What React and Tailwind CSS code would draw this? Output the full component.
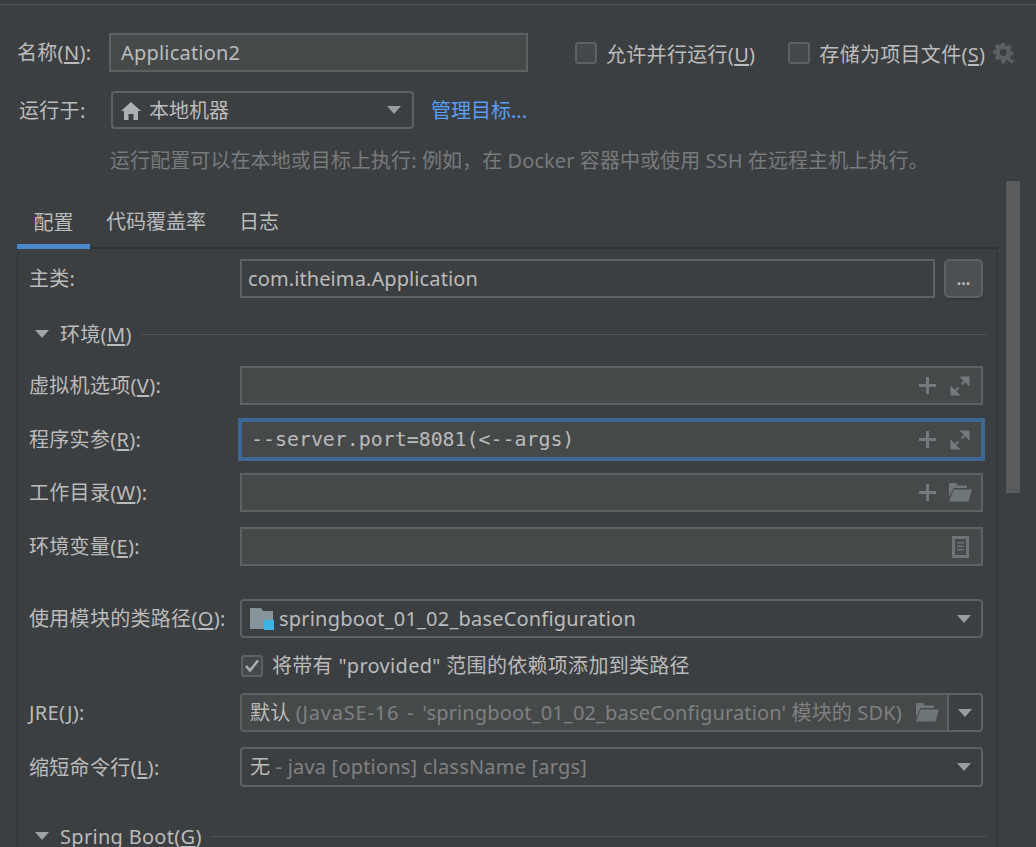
import React from 'react';

const font = { fontFamily: '"Noto Sans", "Noto Sans CJK SC", sans-serif' };

const Plus = () => (
  <svg width="17" height="17" viewBox="0 0 17 17" className="shrink-0">
    <path d="M7 0h3v7h7v3h-7v7H7v-7H0V7h7z" fill="#747a7c" />
  </svg>
);

const Expand = () => (
  <svg width="20" height="20" viewBox="0 0 20 20" className="shrink-0">
    <path d="M9.500 0.500H19.500V10.500z" fill="#747a7c" />
    <path d="M0.500 9.500V19.500H10.500z" fill="#747a7c" />
    <path d="M15 5l-3.500 3.500M5 15l3.500-3.500" stroke="#747a7c" strokeWidth="2" fill="none" />
  </svg>
);

const FolderOpen = () => (
  <svg width="24" height="19" viewBox="0 0 24 19" className="shrink-0">
    <path d="M1 0h7l2 2.500h9V5H5.500L1 14z" fill="#6e7678" />
    <path d="M5.500 6.500H24L20.500 18.500H1z" fill="#6e7678" />
  </svg>
);

const DocIcon = () => (
  <svg width="17" height="22" viewBox="0 0 17 22" className="shrink-0">
    <path fillRule="evenodd" d="M0 0h17v22H0zM3 3v16h11V3z" fill="#6e7375" />
    <path d="M5 6h7v1.500H5zM5 9.500h7V11H5zM5 13h7v1.500H5z" fill="#6e7375" />
  </svg>
);

const Arrow = () => (
  <svg width="14" height="8" viewBox="0 0 14 8" className="shrink-0">
    <path d="M0 0h14L7 8z" fill="#9a9da0" />
  </svg>
);

const Home = () => (
  <svg width="20" height="18" viewBox="0 0 20 18" className="shrink-0">
    <path d="M10 0l10 9h-3v9h-4.500v-6h-5v6H3V9H0z" fill="#aeb1b3" />
  </svg>
);

const Gear = () => (
  <svg width="22" height="22" viewBox="0 0 22 22" className="shrink-0">
    <path
      fillRule="evenodd"
      d="M8.500 1h3.400l.5 2.600 1.700.7 2.200-1.500 2.300 2.400-1.500 2.100.7 1.700 2.600.5v3.400l-2.600.5-.7 1.700 1.500 2.100-2.300 2.400-2.200-1.500-1.700.7-.5 2.600H8.500L8 17.800l-1.700-.7-2.200 1.500-2.300-2.400 1.500-2.100-.7-1.700L0 11.900V8.500l2.600-.5.700-1.700-1.500-2.100 2.300-2.400 2.200 1.500L8 2.600zM10.200 7a3.400 3.400 0 1 0 0 6.800 3.400 3.400 0 0 0 0-6.800z"
      fill="#5c5f61"
    />
    <path d="M15 18h7l-3.500 4z" fill="#5c5f61" />
  </svg>
);

const ModuleIcon = () => (
  <svg width="24" height="22" viewBox="0 0 24 22" className="shrink-0">
    <path d="M0 0h11l2 3h10v10h-9v8H0z" fill="#87939a" />
    <path d="M14 12h10v10H14z" fill="#3db3e4" />
  </svg>
);

const Checkbox = ({ checked }) => (
  <span className="flex h-[22px] w-[22px] shrink-0 items-center justify-center rounded-[3px] border-2 border-[#5d6163] bg-[#43494a]">
    {checked && (
      <svg width="16" height="14" viewBox="0 0 16 14">
        <path d="M2 7l4 4.500L14 1.500" fill="none" stroke="#a9acae" strokeWidth="2.600" />
      </svg>
    )}
  </span>
);

const Label = ({ text, hotkey, after = '):' }) => (
  <span className="inline-block pt-[4px] text-[20px] leading-none tracking-[0.3px] whitespace-nowrap text-[#bbbbbb]">
    {text}
    {hotkey && (
      <>
        (<u className="underline-offset-2">{hotkey}</u>
        {after}
      </>
    )}
  </span>
);

const Row = ({ label, className, children }) => (
  <div className={`flex items-center ${className}`}>
    <div className="w-[211px] shrink-0">{label}</div>
    {children}
  </div>
);

const Field = ({ children, focused, className = 'pr-[11px]' }) => (
  <div
    className={`flex h-[39px] w-[743px] items-center border-2 bg-[#45494a] pl-[9px] ${className} ${
      focused ? 'border-[#3d6795] ring-2 ring-[#3d6795]' : 'border-[#5e6162]'
    }`}
  >
    {children}
  </div>
);

const Section = ({ title, hotkey, className }) => (
  <div className={`flex h-[24px] items-center pl-[6px] ${className}`}>
    <svg width="14" height="8" viewBox="0 0 14 8" className="shrink-0">
      <path d="M0 0h14L7 8z" fill="#a0a3a5" />
    </svg>
    <span className="ml-[11px]">
      <Label text={title} hotkey={hotkey} after=")" />
    </span>
    <div className="mr-[10px] ml-[10px] h-px flex-1 bg-[#525455]" />
  </div>
);

const Combo = ({ children, className }) => (
  <div className={`flex w-[743px] items-center justify-between rounded-[4px] border-2 border-[#5e6162] pr-[10px] pl-[8px] ${className}`}>
    <div className="flex items-center gap-[5px] text-[20px] tracking-[0.2px] whitespace-nowrap text-[#bbbbbb]">{children}</div>
    <Arrow />
  </div>
);

export default function App() {
  return (
    <div className="relative h-[847px] w-full overflow-hidden bg-[#3c3f41]" style={font}>
      <div className="mt-[4px] h-px bg-[#545658]" />

      {/* header */}
      <div className="mt-[28px] flex items-center pl-[17px]">
        <div className="w-[92px] shrink-0">
          <Label text="名称" hotkey="N" />
        </div>
        <div className="flex h-[39px] w-[419px] items-center border-2 border-[#5e6162] bg-[#45494a] pl-[10px] text-[20px] tracking-[0.2px] text-[#bbbbbb]">
          Application2
        </div>
        <div className="ml-[47px] flex items-center gap-[9px]">
          <Checkbox />
          <Label text="允许并行运行" hotkey="U" after=")" />
        </div>
        <div className="ml-[33px] flex items-center gap-[9px]">
          <Checkbox />
          <Label text="存储为项目文件" hotkey="S" after=")" />
        </div>
        <span className="ml-[8px]">
          <Gear />
        </span>
      </div>

      <div className="mt-[19px] flex items-center pl-[19px]">
        <div className="w-[92px] shrink-0">
          <Label text="运行于:" />
        </div>
        <div className="flex h-[38px] w-[303px] items-center justify-between rounded-[4px] border-2 border-[#5e6162] pr-[11px] pl-[8px]">
          <div className="flex items-center gap-[8px] pt-[1px] text-[20px] text-[#bbbbbb]">
            <Home />
            本地机器
          </div>
          <Arrow />
        </div>
        <span className="ml-[17px] pt-[2px] text-[20px] text-[#589df6]">管理目标...</span>
      </div>

      <div className="mt-[18px] h-[28px] pl-[110px] text-[20px] leading-[28px] tracking-[0.08px] whitespace-nowrap text-[#787a7c]">
        运行配置可以在本地或目标上执行: 例如，在 Docker 容器中或使用 SSH 在远程主机上执行。
      </div>

      {/* tabs */}
      <div className="mt-[25px] ml-[17px] flex h-[49px] w-[981px] border-b-2 border-[#323232] text-[20px] text-[#bbbbbb]">
        <div className="-mb-[2px] flex w-[73px] items-center justify-center border-b-[5px] border-[#4a88c7] pt-[1px]">配置</div>
        <div className="flex items-center pb-[3px] pl-[16px]">代码覆盖率</div>
        <div className="flex items-center pb-[3px] pl-[33px]">日志</div>
      </div>

      {/* panel */}
      <div className="ml-[17px] w-[981px] border-x border-[#323537] pt-[10px] pl-[11px]">
        <div className="flex items-center">
          <div className="w-[211px] shrink-0">
            <Label text="主类:" />
          </div>
          <div className="flex h-[39px] w-[695px] items-center border-2 border-[#5e6162] pl-[6px] text-[20px] tracking-[0.1px] text-[#bbbbbb]">
            com.itheima.Application
          </div>
          <div className="ml-[9px] flex h-[39px] w-[39px] items-center justify-center rounded-[5px] border-2 border-[#5e6162] bg-[#4c5052] text-[16px] font-bold text-[#bbbbbb] shadow-[0_2px_2px_#363839]">
            ...
          </div>
        </div>

        <Section title="环境" hotkey="M" className="mt-[24px]" />

        <Row label={<Label text="虚拟机选项" hotkey="V" />} className="mt-[20px]">
          <Field>
            <div className="flex w-full items-center justify-end gap-[14px]">
              <Plus />
              <Expand />
            </div>
          </Field>
        </Row>
        <Row label={<Label text="程序实参" hotkey="R" />} className="mt-[15px]">
          <Field focused>
            <span className="font-['DejaVu_Sans_Mono',monospace] text-[19.900px] text-[#bbbbbb]">--server.port=8081(&lt;--args)</span>
            <div className="ml-auto flex items-center gap-[14px]">
              <Plus />
              <Expand />
            </div>
          </Field>
        </Row>
        <Row label={<Label text="工作目录" hotkey="W" />} className="mt-[14px]">
          <Field className="pr-[9px]">
            <div className="flex w-full items-center justify-end gap-[12px]">
              <Plus />
              <FolderOpen />
            </div>
          </Field>
        </Row>
        <Row label={<Label text="环境变量" hotkey="E" />} className="mt-[15px]">
          <Field className="pr-[12px]">
            <div className="flex w-full items-center justify-end">
              <DocIcon />
            </div>
          </Field>
        </Row>

        <Row label={<Label text="使用模块的类路径" hotkey="O" />} className="mt-[33px]">
          <Combo className="h-[39px]">
            <ModuleIcon />
            springboot_01_02_baseConfiguration
          </Combo>
        </Row>

        <div className="mt-[16px] flex h-[24px] items-center gap-[9px] pl-[212px]">
          <Checkbox checked />
          <span className="text-[20px] tracking-[0.3px] whitespace-nowrap text-[#bbbbbb]">将带有 "provided" 范围的依赖项添加到类路径</span>
        </div>

        <Row label={<Label text="JRE" hotkey="J" />} className="mt-[15px]">
          <div className="flex h-[39px] w-[743px] items-stretch rounded-[4px] border-2 border-[#5e6162]">
            <div className="flex flex-1 items-center justify-between overflow-hidden bg-[#45494a] pr-[8px] pl-[8px] text-[20px] tracking-[0.15px] whitespace-nowrap text-[#808080]">
              <span>
                <span className="text-[#bbbbbb]">默认</span>{' '}
                <span className="tracking-[0.8px] [word-spacing:2px]">(JavaSE-16 - </span>
                'springboot_01_02_baseConfiguration' 模块的 SDK)
              </span>
              <FolderOpen />
            </div>
            <div className="flex w-[34px] items-center justify-center border-l-2 border-[#5e6162]">
              <Arrow />
            </div>
          </div>
        </Row>

        <Row label={<Label text="缩短命令行" hotkey="L" />} className="mt-[15px]">
          <Combo className="h-[40px]">
            <span>
              无 <span className="text-[#808080]">- java [options] className [args]</span>
            </span>
          </Combo>
        </Row>

        <Section title="Spring Boot" hotkey="G" className="mt-[37px]" />
      </div>

      {/* scrollbar overlay */}
      <div className="absolute top-[181px] left-[1006px] h-[312px] w-[14px] bg-[#595b5d]" />
    </div>
  );
}
